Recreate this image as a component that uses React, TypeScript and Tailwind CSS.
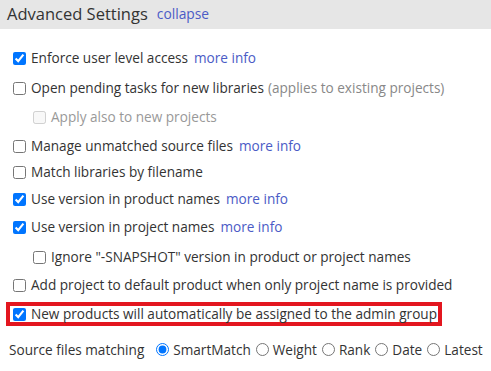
import React from "react";

const font = { fontFamily: '"Open Sans", "Noto Sans", sans-serif' };

function Cb({ checked, disabled }: { checked?: boolean; disabled?: boolean }) {
  return (
    <input
      type="checkbox"
      defaultChecked={checked}
      disabled={disabled}
      className="m-0 h-[13px] w-[13px] shrink-0"
    />
  );
}

function More() {
  return <span className="ml-[6px] text-[#4b5bc6]">more info</span>;
}

function Radio({ label, checked }: { label: string; checked?: boolean }) {
  return (
    <label className="flex items-center">
      <input type="radio" name="sfm" defaultChecked={checked} className="m-0 h-[13px] w-[13px]" />
      <span className="ml-[4px] mr-[5px]">{label}</span>
    </label>
  );
}

export default function App() {
  return (
    <div className="w-[491px] h-[371px] bg-white text-[13.6px] text-[#333] overflow-hidden whitespace-nowrap" style={font}>
      <div className="h-[29px] bg-[#e6e6e6] flex items-center pl-[7px]">
        <span className="text-[16.5px] leading-none">Advanced Settings</span>
        <span className="ml-[9px] text-[13.8px] text-[#4b5bc6]">collapse</span>
      </div>
      <div className="pl-[13px]">
        <div className="mt-[17px] h-[24px] flex items-center">
          <Cb checked />
          <span className="ml-[5px]">Enforce user level access</span>
          <More />
        </div>
        <div className="mt-[6px] h-[24px] flex items-center">
          <Cb />
          <span className="ml-[5px]">Open pending tasks for new libraries</span>
          <span className="ml-[4px] text-[#888]">(applies to existing projects)</span>
        </div>
        <div className="mt-[5px] h-[24px] flex items-center pl-[20px]">
          <Cb disabled />
          <span className="ml-[5px] text-[#999]">Apply also to new projects</span>
        </div>
        <div className="mt-[5px] h-[24px] flex items-center">
          <Cb />
          <span className="ml-[5px]">Manage unmatched source files</span>
          <More />
        </div>
        <div className="mt-[2px] h-[24px] flex items-center">
          <Cb />
          <span className="ml-[5px]">Match libraries by filename</span>
        </div>
        <div className="mt-[3px] h-[24px] flex items-center">
          <Cb checked />
          <span className="ml-[5px]">Use version in product names</span>
          <More />
        </div>
        <div className="mt-[4px] h-[24px] flex items-center">
          <Cb checked />
          <span className="ml-[5px]">Use version in project names</span>
          <More />
        </div>
        <div className="mt-[6px] h-[24px] flex items-center pl-[20px]">
          <Cb />
          <span className="ml-[5px]">Ignore "-SNAPSHOT" version in product or project names</span>
        </div>
        <div className="mt-[4px] h-[24px] flex items-center">
          <Cb />
          <span className="ml-[5px]">Add project to default product when only project name is provided</span>
        </div>
      </div>
      <div className="pl-[6px] mt-[5px]">
        <div className="inline-flex h-[24px] items-center border-[4px] border-[#e3161f] pl-[3px] pr-[1px]">
          <Cb checked />
          <span className="ml-[5px]">New products will automatically be assigned to the admin group</span>
        </div>
      </div>
      <div className="mt-[12px] h-[24px] flex items-center pl-[9px]">
        <span className="mr-[12px]">Source files matching</span>
        <Radio label="SmartMatch" checked />
        <Radio label="Weight" />
        <Radio label="Rank" />
        <Radio label="Date" />
        <Radio label="Latest" />
      </div>
    </div>
  );
}
